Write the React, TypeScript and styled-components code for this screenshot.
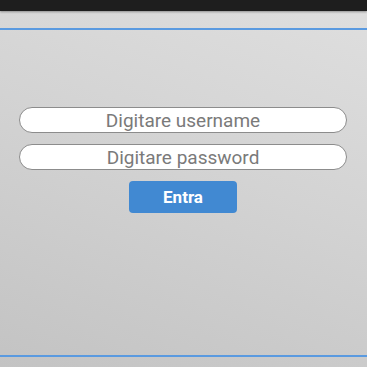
import React from 'react';
import styled, { createGlobalStyle } from 'styled-components';

const GlobalStyle = createGlobalStyle`
  html, body {
    margin: 0;
    padding: 0;
  }
  body {
    font-family: Roboto, "Liberation Sans", sans-serif;
  }
`;

const Screen = styled.div`
  width: 367px;
  height: 367px;
  display: flex;
  flex-direction: column;
  background: linear-gradient(200deg, #dfdfdf 0%, #d3d3d3 45%, #c3c3c3 100%);
  overflow: hidden;
`;

const StatusBar = styled.div`
  height: 11px;
  background: #1e1e1e;
  box-shadow: 0 1px 2px rgba(0, 0, 0, 0.35);
`;

const Header = styled.div`
  height: 19px;
  box-sizing: border-box;
  border-bottom: 2px solid #5a9ae0;
`;

const Main = styled.main`
  flex: 1;
  display: flex;
  flex-direction: column;
  align-items: center;
  padding: 77px 1px 0 0;
  gap: 11px;
`;

const Field = styled.input`
  width: 328px;
  height: 26px;
  box-sizing: border-box;
  border: 1px solid #8c8c8c;
  border-radius: 13px;
  background: #fff;
  font-family: Roboto, "Liberation Sans", sans-serif;
  font-size: 19px;
  color: #777;
  text-align: center;
  padding: 0 12px;
  outline: none;

  &::placeholder {
    color: #7a7a7a;
  }
`;

const LoginButton = styled.button`
  width: 108px;
  height: 32px;
  border: none;
  border-radius: 4px;
  background: #4189d2;
  color: #fff;
  font-family: Roboto, "Liberation Sans", sans-serif;
  font-weight: 700;
  font-size: 17px;
  cursor: pointer;
`;

const Footer = styled.div`
  height: 12px;
  box-sizing: border-box;
  border-top: 2px solid #5a9ae0;
`;

export default function App() {
  return (
    <>
      <GlobalStyle />
      <Screen>
        <StatusBar />
        <Header />
        <Main>
          <Field type="text" placeholder="Digitare username" />
          <Field type="password" placeholder="Digitare password" />
          <LoginButton>Entra</LoginButton>
        </Main>
        <Footer />
      </Screen>
    </>
  );
}
